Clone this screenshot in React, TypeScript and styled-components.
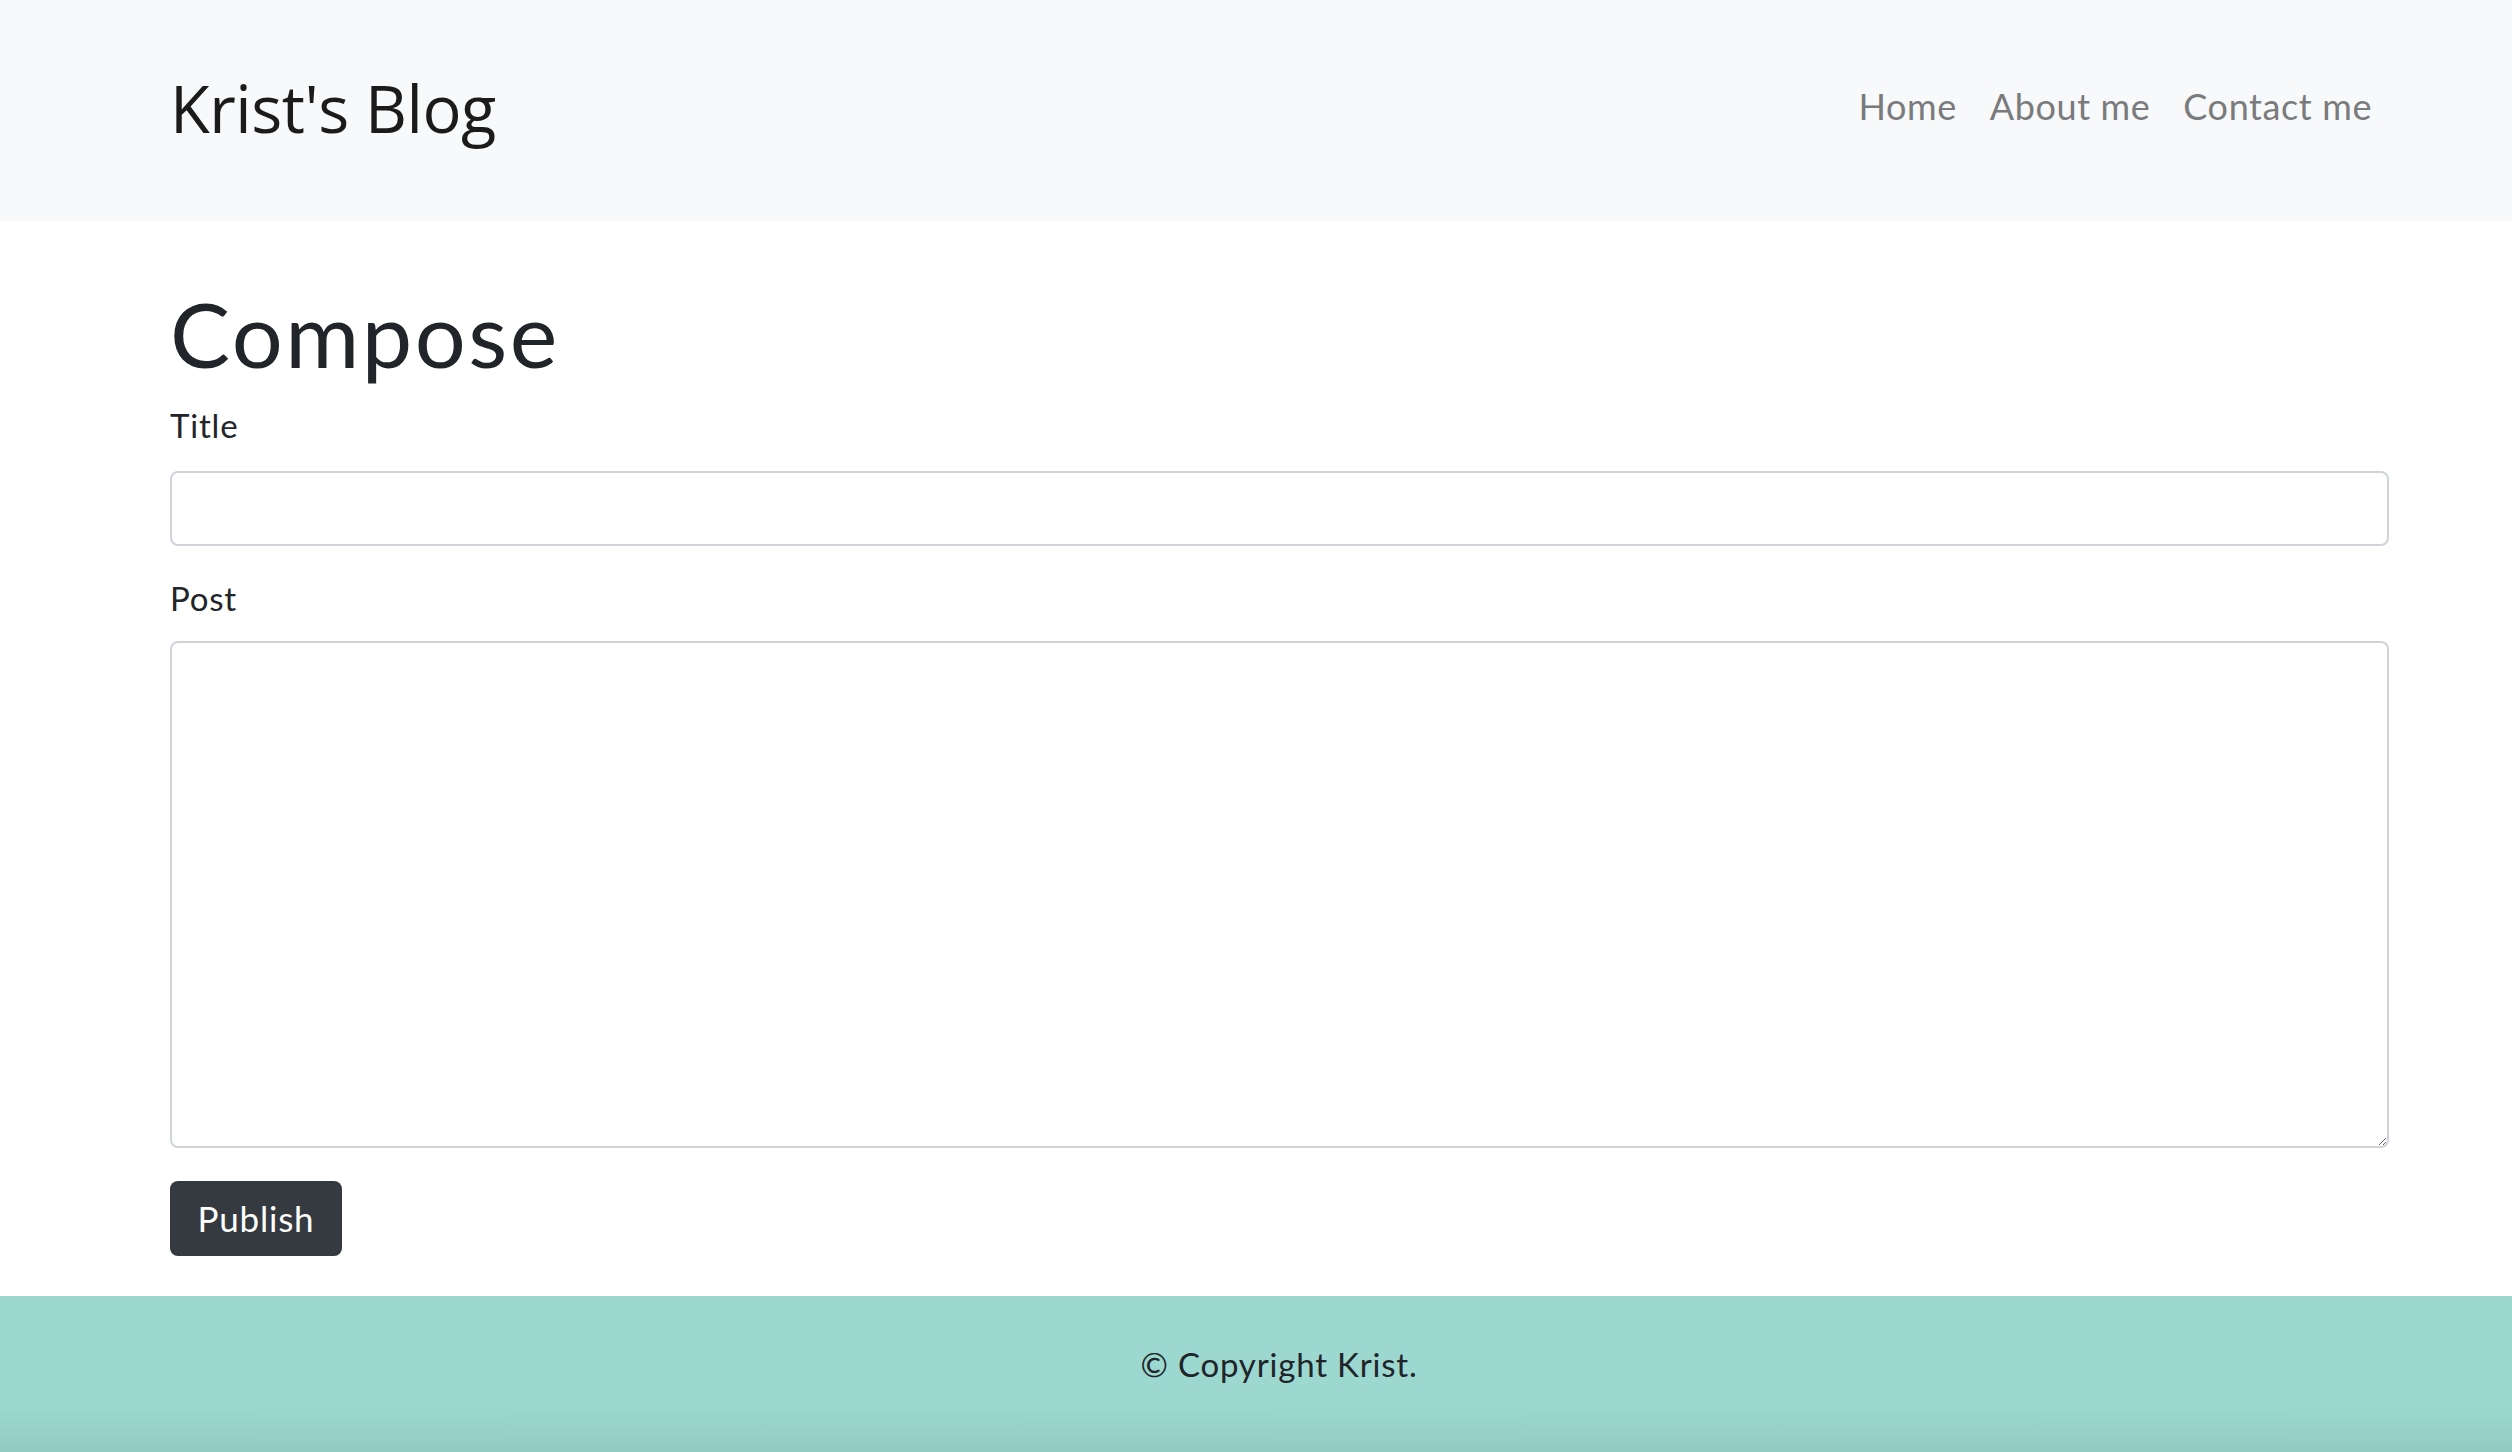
import React from "react"
import styled, { createGlobalStyle } from "styled-components"

const GlobalStyle = createGlobalStyle`
  html, body {
    margin: 0;
    padding: 0;
    background: #ffffff;
    color: #212529;
    font-family: Lato, "Open Sans", sans-serif;
  }
  * {
    box-sizing: border-box;
  }
`

const links = ["Home", "About me", "Contact me"]

export default function App() {
  return (
    <>
      <GlobalStyle />
      <S.Page>
        <S.Header>
          <S.Brand>Krist's Blog</S.Brand>
          <S.Nav>
            {links.map((l) => (
              <S.NavLink key={l} href="#">
                {l}
              </S.NavLink>
            ))}
          </S.Nav>
        </S.Header>

        <S.Main>
          <S.Heading>Compose</S.Heading>
          <S.Form onSubmit={(e) => e.preventDefault()}>
            <S.Label htmlFor="title">Title</S.Label>
            <S.Input id="title" type="text" />
            <S.Label htmlFor="post" $spaced>
              Post
            </S.Label>
            <S.TextArea id="post" />
            <S.Button type="submit">Publish</S.Button>
          </S.Form>
        </S.Main>

        <S.Footer>
          <S.FooterText>© Copyright Krist.</S.FooterText>
        </S.Footer>
      </S.Page>
    </>
  )
}

const S = {
  Page: styled.div`
    display: flex;
    flex-direction: column;
    min-height: 1452px;
  `,
  Header: styled.header`
    height: 221px;
    background: #f8f9fa;
    display: flex;
    align-items: center;
    justify-content: space-between;
    padding: 0 140px 0 170px;
  `,
  Brand: styled.div`
    font-family: "Open Sans", Lato, sans-serif;
    font-size: 65px;
    line-height: 1.2;
    color: #1b1b1b;
    margin-top: -6px;
    letter-spacing: -0.5px;
  `,
  Nav: styled.nav`
    display: flex;
    gap: 33px;
    margin-top: -8px;
  `,
  NavLink: styled.a`
    font-size: 36px;
    line-height: 1.2;
    color: #7a7b7c;
    text-decoration: none;
    letter-spacing: 0.6px;
  `,
  Main: styled.main`
    flex: 1;
    padding: 58px 123px 39px 170px;
  `,
  Heading: styled.h1`
    margin: 0;
    font-size: 90px;
    font-weight: 400;
    line-height: 1.2;
    letter-spacing: 2.5px;
    color: #212529;
  `,
  Form: styled.form`
    display: flex;
    flex-direction: column;
    align-items: flex-start;
    margin-top: 19px;
  `,
  Label: styled.label<{ $spaced?: boolean }>`
    font-size: 33px;
    line-height: 1.2;
    color: #212529;
    letter-spacing: 0.8px;
    margin-top: ${(p) => (p.$spaced ? "33px" : "0")};
    margin-bottom: ${(p) => (p.$spaced ? "23px" : "25px")};
  `,
  Input: styled.input`
    width: 100%;
    height: 75px;
    border: 2px solid #ced4da;
    border-radius: 8px;
    background: #fff;
    font-size: 26px;
    padding: 0 20px;
  `,
  TextArea: styled.textarea`
    width: 100%;
    height: 507px;
    border: 2px solid #ced4da;
    border-radius: 8px;
    background: #fff;
    font-size: 26px;
    padding: 10px 20px;
    resize: vertical;
  `,
  Button: styled.button`
    margin-top: 33px;
    width: 172px;
    height: 75px;
    border: none;
    border-radius: 8px;
    background: #343a40;
    color: #ffffff;
    font-family: Lato, sans-serif;
    font-size: 35px;
    letter-spacing: 0.8px;
    padding: 0 0 2px;
    cursor: pointer;
  `,
  Footer: styled.footer`
    height: 156px;
    background: linear-gradient(to bottom, #9cd8d0 0%, #9cd8d0 70%, #92cbc4 100%);
    display: flex;
    justify-content: center;
    padding-top: 49px;
    padding-left: 46px;
  `,
  FooterText: styled.p`
    margin: 0;
    font-size: 33px;
    line-height: 1.2;
    color: #212529;
    letter-spacing: 0.8px;
  `,
}
